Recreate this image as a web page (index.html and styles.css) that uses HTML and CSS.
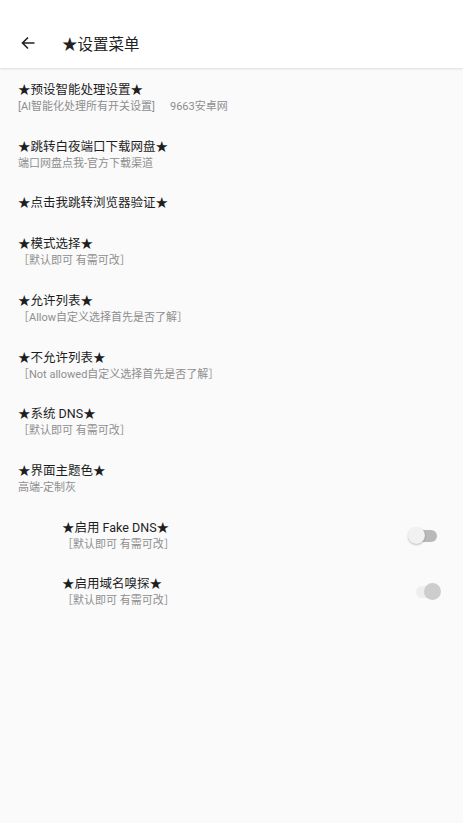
FILE: index.html
```html
<!DOCTYPE html>
<html lang="zh-CN">
<head>
<meta charset="utf-8">
<title>设置菜单</title>
<link rel="stylesheet" href="styles.css">
</head>
<body>
<header class="appbar">
  <svg class="back" width="16" height="16" viewBox="0 0 16 16"><path d="M14.5 8H2.5M8 2.5L2.5 8L8 13.5" fill="none" stroke="#222" stroke-width="1.6"/></svg>
  <span class="apptitle">★设置菜单</span>
</header>
<main class="list">
  <div class="item">
    <div class="title">★预设智能处理设置★</div>
    <div class="sub">[AI智能化处理所有开关设置]<span class="src">9663安卓网</span></div>
  </div>
  <div class="item">
    <div class="title">★跳转白夜端口下载网盘★</div>
    <div class="sub">端口网盘点我-官方下载渠道</div>
  </div>
  <div class="item single">
    <div class="title">★点击我跳转浏览器验证★</div>
  </div>
  <div class="item">
    <div class="title">★模式选择★</div>
    <div class="sub">［默认即可 有需可改］</div>
  </div>
  <div class="item">
    <div class="title">★允许列表★</div>
    <div class="sub">［Allow自定义选择首先是否了解］</div>
  </div>
  <div class="item">
    <div class="title">★不允许列表★</div>
    <div class="sub">［Not allowed自定义选择首先是否了解］</div>
  </div>
  <div class="item">
    <div class="title">★系统 DNS★</div>
    <div class="sub">［默认即可 有需可改］</div>
  </div>
  <div class="item">
    <div class="title">★界面主题色★</div>
    <div class="sub">高端-定制灰</div>
  </div>
  <div class="item indent">
    <div class="text">
      <div class="title">★启用 Fake DNS★</div>
      <div class="sub">［默认即可 有需可改］</div>
    </div>
    <span class="switch off"><span class="track"></span><span class="thumb"></span></span>
  </div>
  <div class="item indent">
    <div class="text">
      <div class="title">★启用域名嗅探★</div>
      <div class="sub">［默认即可 有需可改］</div>
    </div>
    <span class="switch dis"><span class="track"></span><span class="thumb"></span></span>
  </div>
</main>
</body>
</html>
```
FILE: styles.css
```css
* { box-sizing: border-box; }
html, body { margin: 0; padding: 0; }
body {
  width: 463px;
  height: 823px;
  background: #fafafa;
  font-family: Roboto, "Noto Sans CJK SC", sans-serif;
  color: #222;
  overflow: hidden;
}
.appbar {
  height: 68px;
  background: #fff;
  display: flex;
  align-items: center;
  padding: 18px 0 0 20px;
  box-shadow: 0 1px 2px rgba(0,0,0,0.12);
  position: relative;
}
.back { flex: none; }
.apptitle {
  margin-left: 26px;
  font-size: 15.5px;
  color: #222;
}
.item {
  display: flex;
  flex-direction: column;
  align-items: flex-start;
  height: 56.67px;
  padding: 13px 18px 0 18px;
}
.item.single { height: 41px; }
.item.indent {
  flex-direction: row;
  align-items: flex-start;
  padding: 13px 25px 0 62px;
}
.text { flex: 1; }
.title {
  font-size: 12.5px;
  line-height: 18px;
  color: #1e1e1e;
}
.sub {
  font-size: 11px;
  line-height: 16px;
  color: #8e8e8e;
  white-space: nowrap;
}
.src { margin-left: 15px; }
.switch {
  position: relative;
  width: 30px;
  height: 18px;
  flex: none;
  margin-top: 8px;
}
.switch .track {
  position: absolute;
  top: 3px;
  height: 12px;
  border-radius: 6px;
}
.switch .thumb {
  position: absolute;
  top: 0;
  width: 17px;
  height: 17px;
  border-radius: 50%;
}
.switch.off .track { background: #b9b9b9; left: 9px; width: 20px; }
.switch.off .thumb { left: 0; background: #f1f1f1; box-shadow: 0 1px 2px rgba(0,0,0,0.25); }
.switch.dis .track { background: #eeeeee; left: 8px; width: 22px; }
.switch.dis .thumb { left: 16px; background: #cdcdcd; }
```
